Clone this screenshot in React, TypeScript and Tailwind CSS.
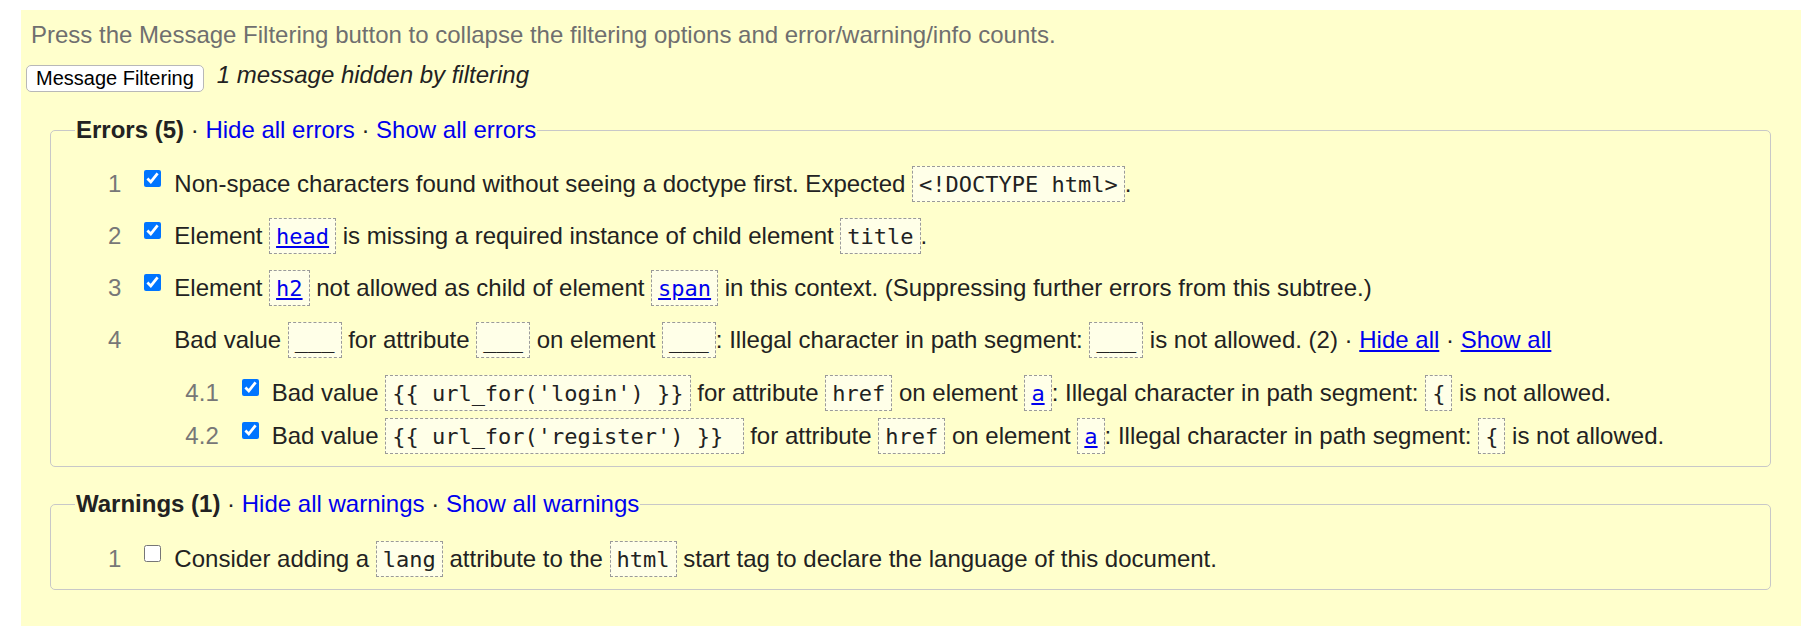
import React from "react";

function Code({ children, link }: { children: React.ReactNode; link?: boolean }) {
  return (
    <code className="inline-block whitespace-pre rounded-none border border-dashed border-[#9a9a9a] bg-[#ffffe8] px-[6px] pt-[5px] pb-[3px] text-[22px] leading-[26px] text-[#222] [font-family:DejaVu_Sans_Mono,monospace]">
      {link ? <a className="cursor-pointer text-[#0000ee] underline">{children}</a> : children}
    </code>
  );
}

function Row({
  num,
  checked,
  noBox,
  className = "",
  children,
}: {
  num: string;
  checked?: boolean;
  noBox?: boolean;
  className?: string;
  children: React.ReactNode;
}) {
  return (
    <div className={`flex items-baseline ${className}`}>
      <span className="text-[#777]">{num}</span>
      {noBox ? (
        <span className="ml-[23px] h-[17px] w-[17px] shrink-0 self-start" />
      ) : (
        <input
          type="checkbox"
          defaultChecked={checked}
          className="ml-[23px] mt-[4px] h-[17px] w-[17px] shrink-0 self-start"
        />
      )}
      <div className="ml-[13px] flex-1 whitespace-nowrap">{children}</div>
    </div>
  );
}

function Sep() {
  return <span className="text-[#222]"> · </span>;
}

export default function App() {
  return (
    <div className="min-h-[640px] bg-white pt-[10px] pl-[21px] [font-family:Liberation_Sans,Arial,sans-serif]">
      <div className="w-[1780px] bg-[#ffffcc] px-[5px] pt-[11px] pb-[36px] text-[24px] leading-[28px] text-[#222]">
        <p className="pl-[5px] text-[#6f6f6f]">
          Press the Message Filtering button to collapse the filtering options and error/warning/info counts.
        </p>
        <div className="mt-[16px] flex items-start">
          <button className="rounded-[5px] border border-[#b8b8b8] bg-white px-[9px] py-[1px] text-[20px] leading-[23px] text-black">
            Message Filtering
          </button>
          <span className="ml-[13px] italic leading-[20px] text-[#222]">1 message hidden by filtering</span>
        </div>

        <fieldset className="ml-[24px] mr-[25px] mt-[24px] rounded-[5px] border border-[#c8c8c8] pl-[24px] pr-[24px] pt-[22px] pb-[12px]">
          <legend className="px-[1px] leading-[28px]">
            <span className="font-bold">Errors (5)</span>
            <Sep />
            <a className="cursor-pointer text-[#0000ee]">Hide all errors</a>
            <Sep />
            <a className="cursor-pointer text-[#0000ee]">Show all errors</a>
          </legend>
          <div className="pl-[33px]">
            <Row num="1" checked>
              Non-space characters found without seeing a doctype first. Expected{" "}
              <Code>{"<!DOCTYPE html>"}</Code>.
            </Row>
            <Row num="2" checked className="mt-[16px]">
              Element <Code link>head</Code> is missing a required instance of child element{" "}
              <Code>title</Code>.
            </Row>
            <Row num="3" checked className="mt-[16px]">
              Element <Code link>h2</Code> not allowed as child of element <Code link>span</Code> in this
              context. (Suppressing further errors from this subtree.)
            </Row>
            <Row num="4" noBox className="mt-[16px]">
              <div>
                Bad value <Code>___</Code> for attribute <Code>___</Code> on element <Code>___</Code>: Illegal
                character in path segment: <Code>___</Code> is not allowed. (2)
                <Sep />
                <a className="cursor-pointer text-[#0000ee] underline">Hide all</a>
                <Sep />
                <a className="cursor-pointer text-[#0000ee] underline">Show all</a>
              </div>
              <div className="ml-[11px] mt-[17px]">
                <Row num="4.1" checked>
                  Bad value <Code>{"{{ url_for('login') }}"}</Code> for attribute <Code>href</Code> on element{" "}
                  <Code link>a</Code>: Illegal character in path segment: <Code>{"{"}</Code> is not allowed.
                </Row>
                <Row num="4.2" checked className="mt-[7px]">
                  Bad value <Code>{"{{ url_for('register') }} "}</Code> for attribute <Code>href</Code> on
                  element <Code link>a</Code>: Illegal character in path segment: <Code>{"{"}</Code> is not
                  allowed.
                </Row>
              </div>
            </Row>
          </div>
        </fieldset>

        <fieldset className="ml-[24px] mr-[25px] mt-[23px] rounded-[5px] border border-[#c8c8c8] pl-[24px] pr-[24px] pt-[23px] pb-[12px]">
          <legend className="px-[1px] leading-[28px]">
            <span className="font-bold">Warnings (1)</span>
            <Sep />
            <a className="cursor-pointer text-[#0000ee]">Hide all warnings</a>
            <Sep />
            <a className="cursor-pointer text-[#0000ee]">Show all warnings</a>
          </legend>
          <div className="pl-[33px]">
            <Row num="1">
              Consider adding a <Code>lang</Code> attribute to the <Code>html</Code> start tag to declare the
              language of this document.
            </Row>
          </div>
        </fieldset>
      </div>
    </div>
  );
}
